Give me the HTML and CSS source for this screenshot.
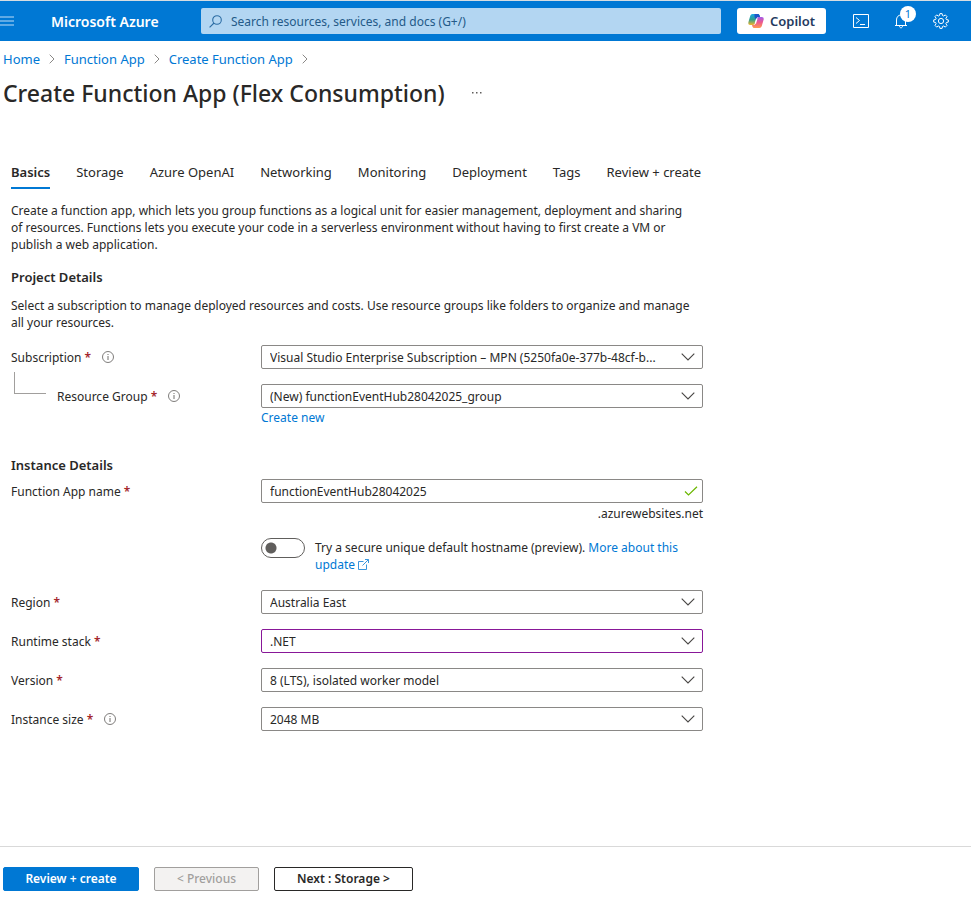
FILE: index.html
```html
<!DOCTYPE html>
<html lang="en">
<head>
<meta charset="utf-8">
<title>Create Function App (Flex Consumption) - Microsoft Azure</title>
<link rel="stylesheet" href="styles.css">
</head>
<body>
<svg class="defs" width="0" height="0" aria-hidden="true">
  <symbol id="chevron" viewBox="0 0 14 8"><path d="M.7.7 7 7 13.3.7" fill="none" stroke="#484644" stroke-width="1.1"/></symbol>
  <symbol id="crumb" viewBox="0 0 6 10"><path d="M.7.7 5 5 .7 9.3" fill="none" stroke="#8a8886"/></symbol>
  <symbol id="info" viewBox="0 0 12 12"><circle cx="6" cy="6" r="5.500" fill="none" stroke="#706e6c" stroke-width=".9"/><path d="M6 5v4M6 3v1" stroke="#706e6c"/></symbol>
</svg>

<header class="topbar">
  <button class="menu" type="button" aria-label="Menu">
    <svg width="14" height="11" viewBox="0 0 14 11"><path d="M0 1h14M0 5h14M0 9h14" stroke="#7fbbea" stroke-width="1.4"/></svg>
  </button>
  <a class="brand" href="#">Microsoft Azure</a>
  <div class="search">
    <svg width="13" height="13" viewBox="0 0 13 13" fill="none" stroke="#2b6ca3" stroke-width="1.1"><circle cx="8" cy="5" r="4.3"/><path d="M5 8 .6 12.4"/></svg>
    <input type="search" aria-label="Search" placeholder="Search resources, services, and docs (G+/)">
  </div>
  <button class="copilot" type="button">
    <svg width="16" height="14" viewBox="0 0 16 14">
      <defs>
        <linearGradient id="cool" x1="0" y1="0" x2="0" y2="1"><stop offset="0" stop-color="#1aa6e8"/><stop offset=".5" stop-color="#2f9f8c"/><stop offset="1" stop-color="#f2b52c"/></linearGradient>
        <linearGradient id="warm" x1="0" y1="0" x2="0" y2="1"><stop offset="0" stop-color="#a45bea"/><stop offset=".5" stop-color="#ee5a8c"/><stop offset="1" stop-color="#ff9a50"/></linearGradient>
      </defs>
      <path d="M4.700 0h5.100c1 0 1.500.6 1.800 1.500L12 3h-1.500c-1.200 0-1.700.6-2.100 1.800L7 9.300C6.600 10.500 6 11 5 11H2.300C.6 11 0 9.800.4 8.200L2.200 2C2.600.7 3.400 0 4.700 0Z" fill="url(#cool)"/>
      <path d="M6.500 0h3.300c1 0 1.500.6 1.800 1.500L12 3h-1.500c-1.200 0-1.700.6-2.100 1.800L8 6 6.500 3Z" fill="#1d55c8"/>
      <path d="M11.300 14H6.200c-1 0-1.500-.6-1.800-1.500L4 11h1.500c1.200 0 1.700-.6 2.100-1.800L9 4.700C9.400 3.500 10 3 11 3h2.700c1.700 0 2.300 1.200 1.900 2.800L13.800 12c-.4 1.300-1.200 2-2.500 2Z" fill="url(#warm)"/>
      <path d="m6.600 9.500 1.500-5h1.500l-1.600 5.200Z" fill="#fff"/>
    </svg>
    <span>Copilot</span>
  </button>
  <nav class="tools" aria-label="Tools">
    <button type="button" aria-label="Cloud Shell">
      <svg width="16" height="14" viewBox="0 0 16 14" fill="none" stroke="#fff"><path d="M.5.500h15v13H.5ZM3 3.500l3.500 3L3 9.500M7 10.500h5"/></svg>
    </button>
    <button type="button" aria-label="Notifications">
      <svg width="14" height="15" viewBox="0 0 14 15" fill="none" stroke="#fff"><path d="M1 11.500h12M2.500 11.500V6C2.500 3 4.300 1 7 1s4.500 2 4.500 5v5.500M5.500 12c0 1 .6 1.800 1.500 1.800s1.500-.8 1.500-1.800"/></svg>
      <span class="badge">1</span>
    </button>
    <button type="button" aria-label="Settings">
      <svg width="16" height="16" viewBox="0 0 16 16" fill="none" stroke="#fff"><path d="M6.900.6h2.200l.4 1.900 1.200.5 1.600-1.100 1.700 1.700L12.900 5.300l.5 1.200 1.900.4v2.200l-1.900.4-.5 1.200 1.100 1.700-1.700 1.700-1.600-1.100-1.200.5-.4 1.900H6.900l-.4-1.900-1.200-.5-1.600 1.100L2 12.400l1.100-1.700-.5-1.200-1.900-.4V6.900l1.900-.4.500-1.200L2 3.600l1.700-1.700L5.300 3l1.200-.5Z"/><circle cx="8" cy="8" r="2.600"/></svg>
    </button>
  </nav>
</header>

<nav class="crumbs" aria-label="Breadcrumb">
  <a href="#">Home</a><svg width="6" height="10"><use href="#crumb"/></svg>
  <a href="#">Function App</a><svg width="6" height="10"><use href="#crumb"/></svg>
  <a href="#">Create Function App</a><svg width="6" height="10"><use href="#crumb"/></svg>
</nav>

<div class="heading">
  <h1>Create Function App (Flex Consumption)</h1>
  <button class="more" type="button" aria-label="More"><svg width="12" height="2" viewBox="0 0 12 2" fill="#605e5c"><path d="M1 0h1.500v1.500H1ZM5 0h1.500v1.500H5ZM9 0h1.500v1.500H9Z"/></svg></button>
</div>

<main>
  <nav class="tabs" aria-label="Steps">
    <a class="current" href="#" aria-current="page">Basics</a>
    <a href="#">Storage</a>
    <a href="#">Azure OpenAI</a>
    <a href="#">Networking</a>
    <a href="#">Monitoring</a>
    <a href="#">Deployment</a>
    <a href="#">Tags</a>
    <a href="#">Review + create</a>
  </nav>

  <form id="create">
    <p>Create a function app, which lets you group functions as a logical unit for easier management, deployment and sharing of resources. Functions lets you execute your code in a serverless environment without having to first create a VM or publish a web application.</p>

    <h2>Project Details</h2>
    <p>Select a subscription to manage deployed resources and costs. Use resource groups like folders to organize and manage all your resources.</p>

    <div class="row first">
      <div class="label"><label for="sub">Subscription <b>*</b></label><svg width="12" height="12"><use href="#info"/></svg></div>
      <div class="select"><select id="sub"><option>Visual Studio Enterprise Subscription – MPN (5250fa0e-377b-48cf-b...</option></select><svg width="14" height="8"><use href="#chevron"/></svg></div>
    </div>
    <div class="row">
      <div class="label child"><i class="branch"></i><label for="group">Resource Group <b>*</b></label><svg width="12" height="12"><use href="#info"/></svg></div>
      <div>
        <div class="select"><select id="group"><option>(New) functionEventHub28042025_group</option></select><svg width="14" height="8"><use href="#chevron"/></svg></div>
        <a class="below" href="#">Create new</a>
      </div>
    </div>

    <h2 class="instance">Instance Details</h2>
    <div class="row name">
      <div class="label"><label for="name">Function App name <b>*</b></label></div>
      <div>
        <div class="select"><input id="name" type="text" value="functionEventHub28042025"><svg width="14" height="10" viewBox="0 0 14 10"><path d="M1 5.500 4.500 9 13 .8" fill="none" stroke="#6bb700" stroke-width="1.200"/></svg></div>
        <span class="below suffix">.azurewebsites.net</span>
        <div class="toggle">
          <input id="unique" type="checkbox" role="switch">
          <div class="hint"><label for="unique">Try a secure unique default hostname (preview).</label> <a href="#">More about this update <svg width="11" height="11" viewBox="0 0 11 11" fill="none" stroke="#3a96dd"><path d="M5.500 2.500h-5v8h8v-5M7 .5h3.500V4M10.500.5 4.500 6.500"/></svg></a></div>
        </div>
      </div>
    </div>
    <div class="row region">
      <div class="label"><label for="region">Region <b>*</b></label></div>
      <div class="select"><select id="region"><option>Australia East</option></select><svg width="14" height="8"><use href="#chevron"/></svg></div>
    </div>
    <div class="row">
      <div class="label"><label for="stack">Runtime stack <b>*</b></label></div>
      <div class="select edited"><select id="stack"><option>.NET</option></select><svg width="14" height="8"><use href="#chevron"/></svg></div>
    </div>
    <div class="row">
      <div class="label"><label for="version">Version <b>*</b></label></div>
      <div class="select"><select id="version"><option>8 (LTS), isolated worker model</option></select><svg width="14" height="8"><use href="#chevron"/></svg></div>
    </div>
    <div class="row">
      <div class="label"><label for="size">Instance size <b>*</b></label><svg width="12" height="12"><use href="#info"/></svg></div>
      <div class="select"><select id="size"><option>2048 MB</option></select><svg width="14" height="8"><use href="#chevron"/></svg></div>
    </div>
  </form>
</main>

<footer>
  <button class="primary" type="submit" form="create">Review + create</button>
  <button class="previous" type="button" disabled>&lt; Previous</button>
  <button class="next" type="button">Next : Storage &gt;</button>
</footer>
</body>
</html>
```
FILE: styles.css
```css
* { box-sizing: border-box; }

body {
  margin: 0;
  min-height: 100vh;
  display: flex;
  flex-direction: column;
  background: #fff;
  color: #292827;
  font: 12px/17px "Noto Sans", "Open Sans", sans-serif;
}

button, input, select { font: inherit; color: inherit; }
button { padding: 0; border: 0; background: none; }
a { color: #0078d4; text-decoration: none; }
svg { display: block; flex: none; }
.defs { position: absolute; }

.topbar {
  display: flex;
  align-items: center;
  height: 41px;
  border-top: 1px solid #d6dde2;
  background: #0078d4;
  color: #fff;
}
.menu { width: 51px; }
.brand { width: 150px; color: #fff; font-size: 14px; font-weight: 600; }
.search {
  display: flex;
  align-items: center;
  gap: 9px;
  flex: 1;
  height: 26px;
  padding: 0 8px;
  border-radius: 2px;
  background: #b3d6f2;
}
.search input {
  flex: 1;
  padding: 0;
  border: 0;
  outline: 0;
  background: none;
}
.search input::placeholder { color: #245a88; opacity: 1; }
.copilot {
  display: flex;
  align-items: center;
  justify-content: center;
  gap: 6px;
  width: 89px;
  height: 26px;
  margin: 0 15px 0 16px;
  border-radius: 3px;
  background: #fff;
  color: #243a5e;
  font-size: 13px;
  font-weight: 600;
}
.tools { display: flex; padding-right: 10px; }
.tools button {
  position: relative;
  display: grid;
  place-items: center;
  width: 40px;
  height: 40px;
}
.badge {
  position: absolute;
  top: 5px;
  right: 5px;
  width: 16px;
  height: 16px;
  border-radius: 8px;
  background: #fff;
  color: #0078d4;
  font-size: 11px;
  line-height: 16px;
}

.crumbs {
  display: flex;
  align-items: center;
  gap: 9px;
  height: 36px;
  padding-left: 3px;
  font-size: 13px;
}
.heading {
  display: flex;
  align-items: center;
  gap: 26px;
  height: 32px;
  padding-left: 3px;
}
h1 { margin: 0; font-size: 23px; line-height: 32px; font-weight: 500; }

main { flex: 1; padding: 49px 11px 0; }
.tabs { display: flex; gap: 26px; font-size: 13px; white-space: nowrap; }
.tabs a { height: 31px; padding-top: 6px; color: inherit; }
.tabs .current { border-bottom: 2px solid #0078d4; font-weight: 600; }

form { max-width: 692px; }
p { max-width: 684px; margin: 13px 0 0; }
h2 { margin: 16px 0 0; font-size: 13px; line-height: 17px; font-weight: 600; }
h2 + p { margin-top: 11px; }

.row {
  display: grid;
  grid-template-columns: 250px 1fr;
  align-items: start;
  margin-top: 15px;
}
.row.first { margin-top: 14px; }
.label { display: flex; align-items: center; gap: 11px; height: 24px; }
.label b { color: #a4262c; font-weight: 600; }
.child { align-items: stretch; }
.child label, .child svg { align-self: center; }
.branch {
  width: 32px;
  height: 22px;
  margin: -12px 0 0 3px;
  border: solid #a19f9d;
  border-width: 0 0 1px 1px;
}

.select { display: grid; align-items: center; }
.select > * { grid-area: 1 / 1; }
.select svg { justify-self: end; margin-right: 8px; pointer-events: none; }
.select input + svg { margin-right: 5px; }
.select select, .select input {
  appearance: none;
  width: 100%;
  height: 24px;
  padding: 0 28px 0 8px;
  border: 1px solid #8a8886;
  border-radius: 2px;
  background: #fff;
  text-overflow: ellipsis;
}
.edited select { border-color: #881798; }

.below { display: block; margin-top: 1px; }
.suffix { margin-top: 2px; text-align: right; }
.instance { margin-top: 31px; }
.name { margin-top: 5px; }

.toggle { display: flex; gap: 10px; margin-top: 16px; }
.toggle input {
  appearance: none;
  flex: none;
  width: 44px;
  height: 20px;
  margin: 0;
  border: 1px solid #605e5c;
  border-radius: 10px;
  background: radial-gradient(circle at 9px 9px, #605e5c 5px, transparent 6px);
}
.toggle .hint { padding-top: 1px; }
.toggle svg { display: inline; vertical-align: -1px; }
.region { margin-top: 17px; }

footer {
  display: flex;
  gap: 15px;
  padding: 20px 3px 10px;
  border-top: 1px solid #d9d9d9;
}
footer button {
  height: 24px;
  padding-bottom: 2px;
  border: 1px solid #292827;
  border-radius: 2px;
  background: #fff;
  font-weight: 600;
}
.primary { width: 136px; border-color: #0078d4; background: #0078d4; color: #fff; }
.previous { width: 105px; border-color: #a19f9d; background: #f3f2f1; color: #a19f9d; font-weight: 500; }
.next { width: 139px; }
```
